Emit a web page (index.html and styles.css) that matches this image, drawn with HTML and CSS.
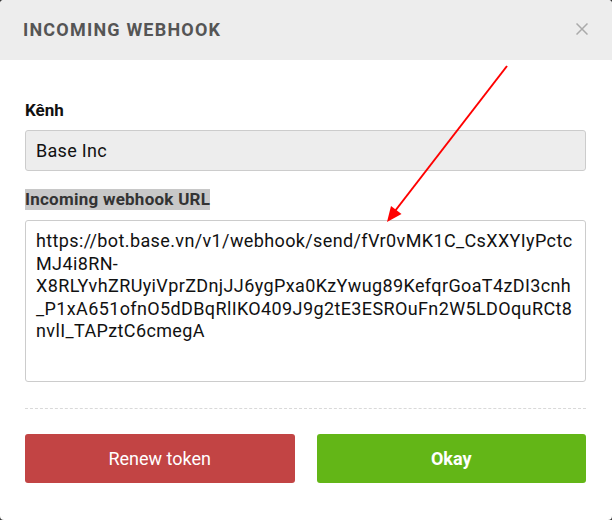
FILE: index.html
```html
<!DOCTYPE html>
<html lang="vi">
<head>
<meta charset="utf-8">
<title>Incoming webhook</title>
<link rel="stylesheet" href="styles.css">
</head>
<body>
<div class="modal">
  <div class="modal-header">
    <h1 class="modal-title">INCOMING WEBHOOK</h1>
    <span class="close" aria-label="Close">
      <svg width="12" height="12" viewBox="0 0 12 12"><path d="M0.5 0.5 L11.5 11.5 M11.5 0.5 L0.5 11.5" stroke="#aaaaaa" stroke-width="1.5" fill="none"/></svg>
    </span>
  </div>
  <div class="modal-body">
    <label class="field-label">Kênh</label>
    <div class="input">Base Inc</div>
    <div class="label-row"><span class="field-label highlight">Incoming webhook URL</span></div>
    <div class="textarea">https://bot.base.vn/v1/webhook/send/fVr0vMK1C_CsXXYIyPctc<br>MJ4i8RN-<br>X8RLYvhZRUyiVprZDnjJJ6ygPxa0KzYwug89KefqrGoaT4zDI3cnh<br>_P1xA651ofnO5dDBqRlIKO409J9g2tE3ESROuFn2W5LDOquRCt8<br>nvlI_TAPztC6cmegA</div>
    <div class="divider"></div>
    <div class="actions">
      <button class="btn btn-danger">Renew token</button>
      <button class="btn btn-success">Okay</button>
    </div>
  </div>
  <svg class="annotation" width="612" height="520" viewBox="0 0 612 520">
    <line x1="507" y1="66" x2="395" y2="211" stroke="#ff0000" stroke-width="2"/>
    <polygon points="387,222 391,206 401.5,214" fill="#ff0000"/>
  </svg>
</div>
</body>
</html>
```
FILE: styles.css
```css
html, body {
  margin: 0;
  padding: 0;
}
body {
  background: #3a3a3a;
  font-family: Roboto, "Liberation Sans", Arial, sans-serif;
}
.modal {
  position: relative;
  width: 612px;
  height: 520px;
  background: #ffffff;
  border-radius: 4px;
  overflow: hidden;
}
.modal-header {
  height: 60px;
  background: #ededed;
  display: flex;
  align-items: center;
  justify-content: space-between;
  padding: 0 24px 0 23px;
}
.modal-title {
  margin: 0;
  font-size: 18px;
  font-weight: 700;
  letter-spacing: 1.2px;
  color: #555555;
  line-height: 20px;
}
.close {
  display: flex;
  width: 12px;
  height: 12px;
  margin-top: -2px;
}
.modal-body {
  padding: 40px 26px 0 25px;
}
.field-label {
  display: block;
  font-size: 17px;
  font-weight: 700;
  line-height: 21px;
  color: #111111;
  margin-bottom: 9px;
}
.label-row {
  display: flex;
  margin-top: 18px;
  margin-bottom: 10px;
}
.field-label.highlight {
  margin: 0;
  background: #c8c8c8;
  color: #333333;
  letter-spacing: 0.25px;
}
.input {
  height: 39px;
  border: 1px solid #cccccc;
  border-radius: 3px;
  background: #ededed;
  padding: 0 10px;
  font-size: 18px;
  letter-spacing: 0.3px;
  line-height: 39px;
  color: #111111;
}
.textarea {
  height: 142px;
  border: 1px solid #cccccc;
  border-radius: 3px;
  background: #ffffff;
  padding: 9px 10px;
  font-size: 18px;
  letter-spacing: 0.38px;
  line-height: 22.6px;
  color: #111111;
  white-space: nowrap;
}
.divider {
  margin-top: 26px;
  border-top: 1px dashed #d9d9d9;
}
.actions {
  margin-top: 25px;
  display: flex;
  gap: 22px;
}
.btn {
  flex: 1;
  height: 49px;
  border: none;
  border-radius: 3px;
  color: #ffffff;
  font-family: Roboto, "Liberation Sans", Arial, sans-serif;
  font-size: 18px;
  padding: 0;
}
.btn-danger {
  background: #c24444;
  font-weight: 400;
}
.btn-success {
  background: #63b617;
  font-weight: 700;
}
.annotation {
  position: absolute;
  left: 0;
  top: 0;
  pointer-events: none;
}
```
